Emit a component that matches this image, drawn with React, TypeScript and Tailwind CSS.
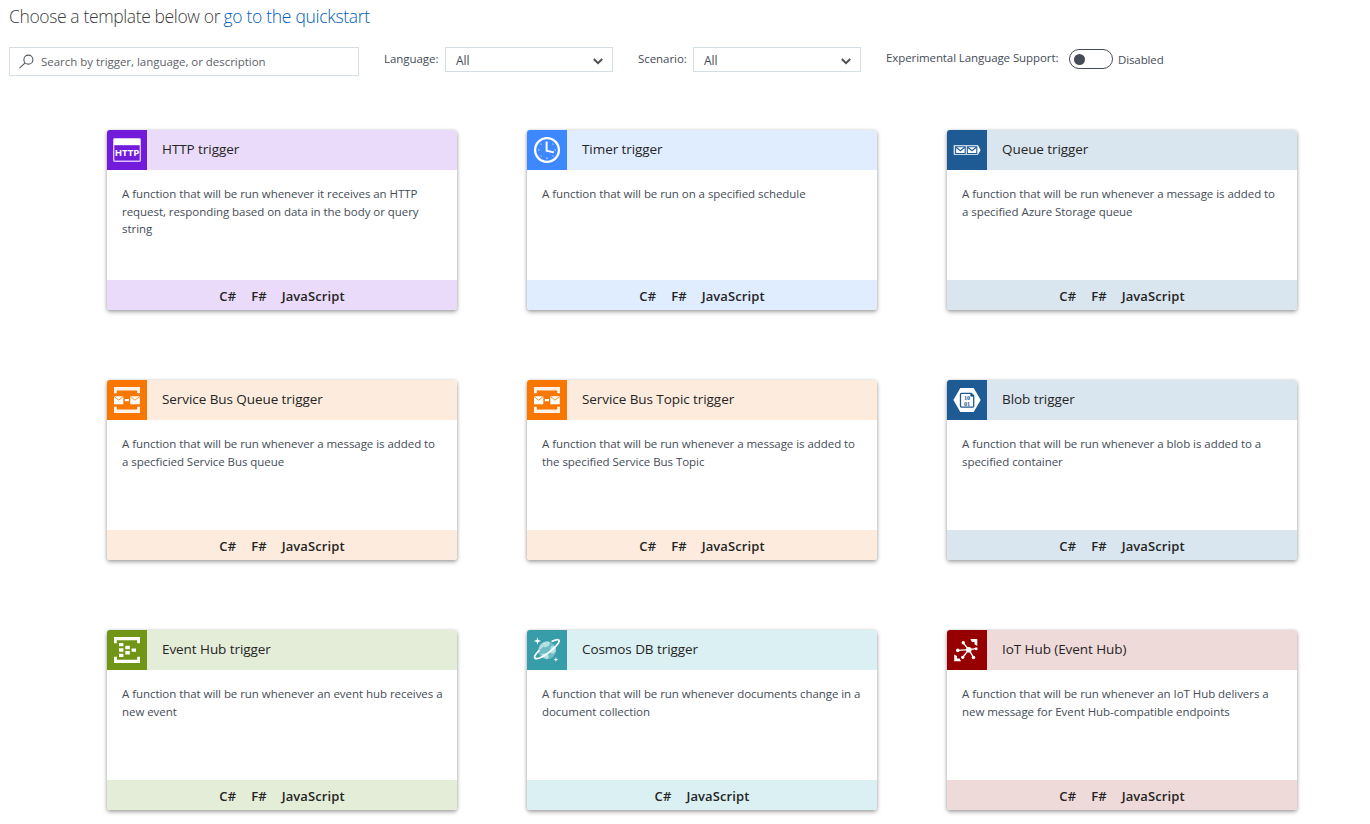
import type { ReactNode } from 'react';

const HttpIcon = () => (
  <svg viewBox="0 0 40 40" className="block size-10">
    <rect x="6.7" y="8.7" width="26.6" height="22.6" rx="1" fill="none" stroke="#d9c3f5" strokeWidth="1.4" />
    <rect x="7" y="9" width="26" height="6.2" fill="#fff" />
    <text x="20" y="26.1" textAnchor="middle" textLength="24.6" lengthAdjust="spacingAndGlyphs" fontFamily="Open Sans, sans-serif" fontWeight="700" fontSize="9" fill="#fff">
      HTTP
    </text>
  </svg>
);

const TimerIcon = () => (
  <svg viewBox="0 0 40 40" className="block size-10">
    <circle cx="20" cy="20" r="11.9" fill="none" stroke="#fff" strokeWidth="2.3" />
    <path d="M19.6 11.5V20.6L26.8 22.4" fill="none" stroke="#fff" strokeWidth="2" />
    <g fill="#a9caff">
      <rect x="11" y="19.3" width="1.5" height="1.5" />
      <rect x="27.5" y="19.3" width="1.5" height="1.5" />
      <rect x="19.2" y="27.5" width="1.5" height="1.5" />
      <rect x="13.5" y="13.5" width="1.3" height="1.3" />
      <rect x="25.3" y="13.5" width="1.3" height="1.3" />
      <rect x="13.5" y="25.3" width="1.3" height="1.3" />
      <rect x="25.3" y="25.3" width="1.3" height="1.3" />
    </g>
  </svg>
);

const QueueIcon = () => (
  <svg viewBox="0 0 40 40" className="block size-10">
    <path d="M6.7 15.2H31L33.6 20 31 24.8H6.7Z" fill="#fff" />
    <path d="M8.6 16.8H18.2V23.5H8.6ZM20.3 16.8H29.8V23.5H20.3Z" fill="#fff" stroke="#1e5a94" strokeWidth="1.1" />
    <path d="M9 17.2 13.4 20.7 17.8 17.2M20.7 17.2 25 20.7 29.4 17.2" fill="none" stroke="#1e5a94" strokeWidth="1.1" />
    <path d="M7.7 16V24" stroke="#9db9d2" strokeWidth=".6" />
  </svg>
);

const ServiceBusIcon = () => (
  <svg viewBox="0 0 40 40" className="block size-10">
    <path d="M7 7H33V13.2H30.2V10.4H9.8V13.2H7ZM7 33H33V26.8H30.2V29.6H9.8V26.8H7Z" fill="#fff3e7" />
    <path d="M7 16.2H16.3V24.2H7ZM23.3 16.2H32.8V24.2H23.3Z" fill="#fff" />
    <path d="M7 16.4 11.7 20.2 16.3 16.4M23.3 16.4 28 20.2 32.8 16.4" fill="none" stroke="#f98d2b" strokeWidth="1" />
    <path d="M17.8 19.1H22V21.2H17.8Z" fill="#fff" />
  </svg>
);

const BlobIcon = () => (
  <svg viewBox="0 0 40 40" className="block size-10">
    <path d="M13.3 8H26.7L33.7 20 26.7 32H13.3L6.4 20Z" fill="#fff" />
    <path d="M14.5 13.3H24.2L26.7 15.8V26.1Q26.7 27.1 25.7 27.1H14.5Q13.5 27.1 13.5 26.1V14.3Q13.5 13.3 14.5 13.3Z" fill="#fff" stroke="#1e5a94" strokeWidth="1.3" />
    <path d="M23.8 13V16.2H27" fill="#1e5a94" stroke="#1e5a94" strokeWidth=".8" />
    <g fontFamily="Liberation Serif, serif" fontWeight="700" fontSize="6.2" fill="#1e5a94" textAnchor="middle">
      <text x="20" y="20">10</text>
      <text x="20" y="25.7">01</text>
    </g>
  </svg>
);

const EventHubIcon = () => (
  <svg viewBox="0 0 40 40" className="block size-10">
    <path d="M7 7H33V13.2H30.2V10.2H9.8V13.2H7ZM7 33H33V26.8H30.2V29.8H9.8V26.8H7Z" fill="#fff" />
    <path d="M12 13H16.4V16.3H12ZM12 18.3H16.4V21.7H12ZM12 23.7H16.4V27H12ZM18.3 15.8H22.8V19.2H18.3ZM18.3 21H22.8V24.4H18.3ZM24.6 18.4H29V21.8H24.6Z" fill="#fff" />
  </svg>
);

const CosmosIcon = () => (
  <svg viewBox="0 0 40 40" className="block size-10">
    <circle cx="20" cy="20.3" r="9" fill="#6dbcc5" />
    <path d="M15 13.4Q19 10.3 23 12L22 15.4 18.4 17.5 16.5 16.6 14 19H12Q12.6 15.5 15 13.4ZM24.5 16 27.8 15.8Q29.5 19 28.6 22L25 24 22.7 21.3ZM14 24 19.5 23 22 26.5 20.4 29.2Q16.4 28.5 14 24Z" fill="#b8e0e4" />
    <path d="M12.2 20.3C8.3 24.2 6.6 27.2 8.1 28.2C10.7 29.9 18 25.9 24.2 20.6C30.2 15.4 33.7 11.1 31.4 9.8C30.4 9.2 28 9.9 25.2 11.2" fill="none" stroke="#fff" strokeWidth="1.7" strokeLinecap="round" />
    <path d="M10.5 7.2 11.4 10.1 14.2 11 11.4 11.9 10.5 14.8 9.6 11.9 6.8 11 9.6 10.1ZM28.9 27.1 29.5 29 31.4 29.6 29.5 30.2 28.9 32.1 28.3 30.2 26.4 29.6 28.3 29Z" fill="#fff" />
  </svg>
);

const IotIcon = () => (
  <svg viewBox="0 0 40 40" className="block size-10">
    <path d="M23.4 9H30.3V15.9L27.5 14.2V11.9H25ZM7.2 24.4 10 26V28.5H12.6L14 31.2H7.2Z" fill="#fff" />
    <path d="M21.8 19.7 16.3 13M21.8 19.7 29.1 18.7M21.8 19.7 26.5 27.3M21.8 19.7 16 27M21.8 19.7 10.8 20.4" fill="none" stroke="#fff" strokeWidth="1.3" />
    <g fill="#fff">
      <circle cx="21.8" cy="19.7" r="2.8" />
      <circle cx="16.3" cy="12.7" r="1.7" />
      <circle cx="29.1" cy="18.7" r="1.5" />
      <circle cx="26.5" cy="27.5" r="1.8" />
      <circle cx="15.7" cy="27.3" r="1.6" />
      <circle cx="10.8" cy="20.4" r="1.8" />
    </g>
  </svg>
);

type Template = {
  title: string;
  lines: string[];
  icon: ReactNode;
  iconBg: string;
  tint: string;
  languages?: string[];
};

const templates: Template[] = [
  { title: 'HTTP trigger', lines: ['A function that will be run whenever it receives an HTTP', 'request, responding based on data in the body or query', 'string'], icon: <HttpIcon />, iconBg: 'bg-[#731bda]', tint: 'bg-[#eadbfa]' },
  { title: 'Timer trigger', lines: ['A function that will be run on a specified schedule'], icon: <TimerIcon />, iconBg: 'bg-[#3d87ff]', tint: 'bg-[#e0ecff]' },
  { title: 'Queue trigger', lines: ['A function that will be run whenever a message is added to', 'a specified Azure Storage queue'], icon: <QueueIcon />, iconBg: 'bg-[#1e5a94]', tint: 'bg-[#dae6ef]' },
  { title: 'Service Bus Queue trigger', lines: ['A function that will be run whenever a message is added to', 'a specficied Service Bus queue'], icon: <ServiceBusIcon />, iconBg: 'bg-[#f87700]', tint: 'bg-[#fdecdd]' },
  { title: 'Service Bus Topic trigger', lines: ['A function that will be run whenever a message is added to', 'the specified Service Bus Topic'], icon: <ServiceBusIcon />, iconBg: 'bg-[#f87700]', tint: 'bg-[#fdecdd]' },
  { title: 'Blob trigger', lines: ['A function that will be run whenever a blob is added to a', 'specified container'], icon: <BlobIcon />, iconBg: 'bg-[#1e5a94]', tint: 'bg-[#dae6ef]' },
  { title: 'Event Hub trigger', lines: ['A function that will be run whenever an event hub receives a', 'new event'], icon: <EventHubIcon />, iconBg: 'bg-[#719516]', tint: 'bg-[#e4edd8]' },
  { title: 'Cosmos DB trigger', lines: ['A function that will be run whenever documents change in a', 'document collection'], icon: <CosmosIcon />, iconBg: 'bg-[#379da9]', tint: 'bg-[#daf0f3]', languages: ['C#', 'JavaScript'] },
  { title: 'IoT Hub (Event Hub)', lines: ['A function that will be run whenever an IoT Hub delivers a', 'new message for Event Hub-compatible endpoints'], icon: <IotIcon />, iconBg: 'bg-[#960000]', tint: 'bg-[#efdada]' },
];

function Card({ title, lines, icon, iconBg, tint, languages = ['C#', 'F#', 'JavaScript'] }: Template) {
  return (
    <article className="flex h-[180px] w-[350px] flex-col overflow-hidden rounded-[3px] bg-white shadow-[0_2px_4px_rgba(0,0,0,0.35),0_0_3px_rgba(0,0,0,0.12)]">
      <header className={`flex h-10 items-center ${tint}`}>
        <div className={`size-10 ${iconBg}`}>{icon}</div>
        <h2 className="mb-0.5 ml-[15px] text-[13.5px] leading-5 tracking-[-0.07px] text-[#252525]">{title}</h2>
      </header>
      <p className="flex-1 px-[15px] pt-[15px] text-[11.5px] leading-[17.7px] tracking-[-0.05px] whitespace-nowrap text-[#444c58]">
        {lines.map((line) => (
          <span key={line} className="block">{line}</span>
        ))}
      </p>
      <footer className={`flex h-[30px] items-center justify-center gap-[15px] pt-px text-[13px] leading-5 font-semibold tracking-[0.1px] text-[#252525] ${tint}`}>
        {languages.map((language) => (
          <span key={language}>{language}</span>
        ))}
      </footer>
    </article>
  );
}

function Dropdown({ label }: { label: string }) {
  return (
    <div className="flex">
      <span className="pt-px text-[11.5px] leading-[22px] tracking-[-0.05px]">{label}</span>
      <button className="ml-auto flex h-[25px] w-[168px] items-center justify-between border border-[#d4dfe5] pr-[9px] pl-2.5 text-[12px]">
        <span className="pt-[3px]">All</span>
        <svg viewBox="0 0 10 7" className="mt-[3px] h-[7px] w-2.5" fill="none" stroke="#505050" strokeWidth="2">
          <path d="M.8 1 5 5.2 9.2 1" />
        </svg>
      </button>
    </div>
  );
}

export default function App() {
  return (
    <main className="h-[824px] w-[1370px] overflow-hidden bg-white pt-1 font-['Open_Sans','Noto_Sans',sans-serif] text-[#444c58]">
      <h1 className="flex pl-[9px] text-[17.5px] leading-6 font-light whitespace-nowrap text-[#3c3c3c]">
        <span className="w-[214.5px] tracking-[-0.38px]">Choose a template below or</span>
        <a className="tracking-[-0.3px] text-[#005eb8]">go to the quickstart</a>
      </h1>
      <div className="mt-[19px] flex h-[29px] pl-[9px] whitespace-nowrap">
        <label className="flex h-[29px] w-[350px] items-center border border-[#d4dfe5] pl-[9px] text-[11.5px] tracking-[-0.03px] text-[#5d6269]">
          <svg viewBox="0 0 16 16" className="mr-[7px] size-[15px]" fill="none" stroke="#505861" strokeWidth="1.15">
            <circle cx="10" cy="6" r="4.8" />
            <path d="M6.5 9.5.6 15.1" />
          </svg>
          <span>Search by trigger, language, or description</span>
        </label>
        <div className="ml-[25px] w-[229px]"><Dropdown label="Language:" /></div>
        <div className="ml-[25px] w-[223px]"><Dropdown label="Scenario:" /></div>
        <span className="ml-[25px] w-[183px] text-[11.5px] leading-[22px] tracking-[-0.09px]">Experimental Language Support:</span>
        <span className="mt-[2px] flex h-5 w-11 items-center rounded-full border border-[#444c58] pl-[4px]">
          <span className="size-[11px] rounded-full bg-[#444c58]" />
        </span>
        <span className="ml-[5px] pt-0.5 text-[11.5px] leading-[22px] tracking-[-0.12px]">Disabled</span>
      </div>
      <section className="mt-[54px] grid grid-cols-[repeat(3,350px)] gap-[70px] pl-[107px]">
        {templates.map((template) => (
          <Card key={template.title} {...template} />
        ))}
      </section>
    </main>
  );
}
